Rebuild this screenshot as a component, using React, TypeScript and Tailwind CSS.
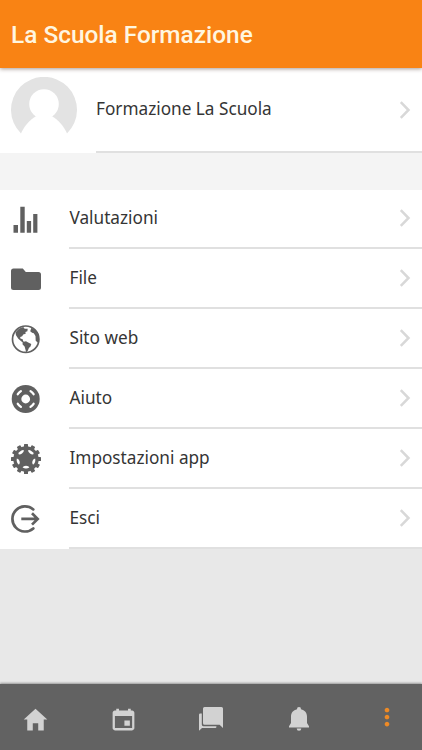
import type { ReactNode } from "react";
import { IoMdHome, IoMdCalendar, IoMdMore } from "react-icons/io";

interface IMenuItem {
  label: string;
  icon: ReactNode;
}

const StatsIcon = () => (
  <svg viewBox="0 0 32 32" className="h-8 w-8" fill="currentColor">
    <path d="M3.5 22h4.500v7.700h-4.500zM10.300 3.800h4.400v25.900h-4.400zM16.800 18h4.300v11.700h-4.300zM23.200 11h4.200v18.700h-4.200z" />
  </svg>
);

const FolderIcon = () => (
  <svg viewBox="0 0 32 32" className="h-8 w-8" fill="currentColor">
    <path d="M3.5 5.500h9.300l3 3.500h12.700a2.500 2.500 0 0 1 2.500 2.500v13a2.500 2.500 0 0 1-2.500 2.500h-25a2.500 2.500 0 0 1-2.500-2.500v-16.500a2.500 2.500 0 0 1 2.500-2.500z" />
  </svg>
);

const GlobeIcon = () => (
  <svg viewBox="0 0 32 32" className="h-8 w-8" fill="currentColor">
    <circle cx="15.7" cy="16.2" r="13.2" fill="none" stroke="currentColor" strokeWidth="1.7" />
    <path d="M5.500 9.500Q8.600 4.800 13.300 4l1.300 1.700 3.100.1-.3 2.500-2 .6.3 1.800-2.500.8-1 1.800-2 .7.2 1.600 2.300.6.5 2 1.500 1.300-2.600-.4-3.800-3.300-2.300-3.500z" />
    <path d="M12.600 19.100l3.400-.8 2.200 1.300 3.100 1.300-.8 2.600-1.600 1.600-1.100 2.700-1.600 1.500-.9-3.200-.7-2.500-2-2.200z" />
    <path d="M21.500 4.500l-1.300 3.800 1.900 1.500 1.700.4 1.700 2.800.2 4.800 2.500 2.200.8-4-1-6.500z" />
  </svg>
);

const BuoyIcon = () => (
  <svg viewBox="0 0 32 32" className="h-8 w-8">
    <circle cx="15.7" cy="16" r="14" fill="currentColor" />
    <circle cx="15.7" cy="16" r="4.400" fill="#fff" />
    <g stroke="#fff" strokeWidth="2.300" strokeLinecap="round" fill="none">
      <path d="M7.800 11.200Q9 9.400 10.900 8.100M20.500 8.100Q22.400 9.400 23.600 11.200M7.800 20.800Q9 22.600 10.900 23.900M20.500 23.900Q22.400 22.600 23.600 20.800" />
    </g>
  </svg>
);

const TEETH = Array.from({ length: 12 }, (_, i) => i * 30);
const HOLES = [0, 72, 144, 216, 288];

const CogIcon = () => (
  <svg viewBox="0 0 32 32" className="h-8 w-8" fill="currentColor">
    <circle cx="16" cy="16" r="12.7" />
    {TEETH.map((deg) => (
      <rect key={deg} x="14" y="1" width="4" height="4" rx=".5" transform={`rotate(${deg} 16 16)`} />
    ))}
    {HOLES.map((deg) => (
      <path
        key={deg}
        d="M12.600 24.500Q13.200 22.800 16 22.800T19.400 24.500Q16 26.600 12.600 24.500z"
        fill="#fff"
        transform={`rotate(${deg} 16 16)`}
      />
    ))}
  </svg>
);

const LogOutIcon = () => (
  <svg viewBox="0 0 32 32" className="h-8 w-8" fill="none" stroke="currentColor" strokeWidth="2.7">
    <path d="M23.300 6.400A12.600 12.600 0 1 0 23.300 25.400" strokeLinecap="round" />
    <path d="M11.300 15.900H27.500M22 10.200l5.700 5.700-5.700 5.700" />
  </svg>
);

const ChatIcon = () => (
  <svg viewBox="0 0 28 28" className="h-7 w-7" fill="currentColor">
    <path d="M7.500 2h17a1.500 1.500 0 0 1 1.500 1.500V23l-3.400-3.200H7.500A1.500 1.500 0 0 1 6 18.300V3.500A1.500 1.500 0 0 1 7.500 2z" />
    <path d="M4.800 8.600v11a1.600 1.600 0 0 0 1.600 1.600h13v.7a1 1 0 0 1-1 1H5L2 25.800V9.800a1.200 1.200 0 0 1 1.200-1.200z" />
  </svg>
);

const BellIcon = () => (
  <svg viewBox="0 0 28 28" className="h-7 w-7" fill="currentColor">
    <path d="M14 2a2 2 0 0 1 2 2.200c3.700.8 6 3.600 6 7.300v6.500l2 3.300v1.200H4v-1.200l2-3.300v-6.500c0-3.700 2.300-6.500 6-7.300A2 2 0 0 1 14 2z" />
    <path d="M11.700 23.500h4.600a2.300 2.300 0 0 1-4.600 0z" />
  </svg>
);

const Chevron = () => (
  <svg viewBox="0 0 12 18" className="h-[18px] w-3 shrink-0" fill="none" stroke="#d8d8d8" strokeWidth="2.5">
    <path d="M1.800 1.200 9.500 9l-7.700 7.800" />
  </svg>
);

const Avatar = () => (
  <svg viewBox="0 0 66 66" className="h-[66px] w-[66px] shrink-0">
    <path d="M10 56.500A33 33 0 1 1 56 56.500z" fill="#e3e3e3" />
    <path d="M9.500 57.500C13 49.500 18.500 42.500 25 39.200h16C47.500 42.500 53 49.500 56.500 57.500z" fill="#fff" />
    <circle cx="33" cy="27" r="14.8" fill="#fff" />
  </svg>
);

const menuItems: IMenuItem[] = [
  { label: "Valutazioni", icon: <StatsIcon /> },
  { label: "File", icon: <FolderIcon /> },
  { label: "Sito web", icon: <GlobeIcon /> },
  { label: "Aiuto", icon: <BuoyIcon /> },
  { label: "Impostazioni app", icon: <CogIcon /> },
  { label: "Esci", icon: <LogOutIcon /> },
];

const tabs = [
  { id: "home", icon: <IoMdHome size={29} /> },
  { id: "calendar", icon: <IoMdCalendar size={29} /> },
  { id: "messages", icon: <ChatIcon /> },
  { id: "notifications", icon: <BellIcon /> },
];

const MenuRow: React.FC<{ item: IMenuItem }> = ({ item }) => {
  return (
    <li className="flex h-[59.9px] bg-white">
      <div className="flex w-[69px] shrink-0 items-center pl-[10px] text-[#606060]">{item.icon}</div>
      <div className="flex flex-1 items-center justify-between border-b-2 border-[#e0e0e0] pr-[11px]">
        <span className="pl-[0.5px] text-[17.2px] leading-6">{item.label}</span>
        <Chevron />
      </div>
    </li>
  );
};

export default function App() {
  return (
    <div className="flex h-[750px] w-[422px] flex-col overflow-hidden bg-[#e8e8e8] font-['Noto_Sans',sans-serif] text-[#353535]">
      <header className="z-10 flex h-[68px] shrink-0 items-center bg-[#f98314] pt-0.5 pl-[11px] shadow-[0_1px_4px_rgba(60,30,20,0.45)]">
        <h1 className="font-[Roboto,sans-serif] text-[24.4px] font-medium text-[#fff6e0]">La Scuola Formazione</h1>
      </header>

      <main className="flex-1">
        <section className="flex h-[85px] bg-white">
          <div className="w-[96px] shrink-0 pt-[9px] pl-[11px]">
            <Avatar />
          </div>
          <div className="flex flex-1 items-center justify-between border-b-2 border-[#e0e0e0] pr-[11px]">
            <span className="pb-0.5 text-[17.2px] leading-6">Formazione La Scuola</span>
            <Chevron />
          </div>
        </section>
        <div className="h-[36.5px] bg-[#f4f4f4]" />
        <ul>
          {menuItems.map((item) => (
            <MenuRow key={item.label} item={item} />
          ))}
        </ul>
      </main>

      <nav className="flex h-[66px] shrink-0 items-center justify-between bg-[#626262] px-[21px] pt-1 text-[#d2d2d2] shadow-[0_-1px_2px_rgba(0,0,0,0.35)]">
        {tabs.map((tab) => (
          <button key={tab.id} className="flex h-7 w-7 items-center justify-center [&>svg]:shrink-0">
            {tab.icon}
          </button>
        ))}
        <button className="flex h-7 w-7 items-center justify-center pb-1 text-[#ee8a25] [&>svg]:shrink-0">
          <IoMdMore size={30} />
        </button>
      </nav>
    </div>
  );
}
